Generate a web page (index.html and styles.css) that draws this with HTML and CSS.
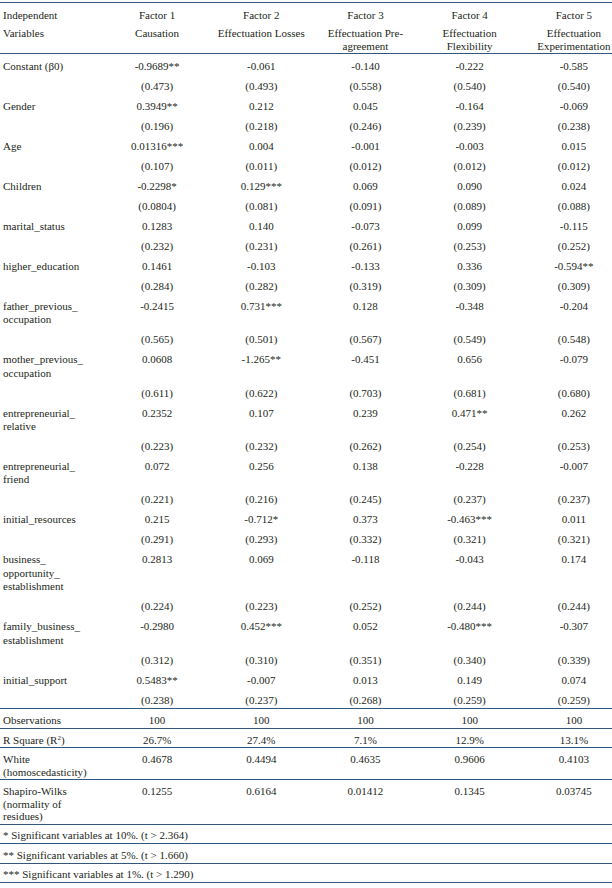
FILE: index.html
```html
<!DOCTYPE html>
<html>
<head>
<meta charset="utf-8">
<link rel="stylesheet" href="styles.css">
</head>
<body>
<div class="frame">
<table class="reg">
  <colgroup>
    <col class="c-var">
    <col class="c-f"><col class="c-f"><col class="c-f"><col class="c-f"><col class="c-f">
  </colgroup>
  <thead>
    <tr class="h1">
      <th class="var">Independent</th>
      <th>Factor 1</th><th>Factor 2</th><th>Factor 3</th><th>Factor 4</th><th>Factor 5</th>
    </tr>
    <tr class="h2">
      <th class="var">Variables</th>
      <th>Causation</th>
      <th>Effectuation Losses</th>
      <th>Effectuation Pre-<br>agreement</th>
      <th>Effectuation<br>Flexibility</th>
      <th>Effectuation<br>Experimentation</th>
    </tr>
  </thead>
  <tbody>
    <tr><td class="var">Constant (β0)</td><td>-0.9689**</td><td>-0.061</td><td>-0.140</td><td>-0.222</td><td>-0.585</td></tr>
    <tr><td class="var"></td><td>(0.473)</td><td>(0.493)</td><td>(0.558)</td><td>(0.540)</td><td>(0.540)</td></tr>
    <tr><td class="var">Gender</td><td>0.3949**</td><td>0.212</td><td>0.045</td><td>-0.164</td><td>-0.069</td></tr>
    <tr><td class="var"></td><td>(0.196)</td><td>(0.218)</td><td>(0.246)</td><td>(0.239)</td><td>(0.238)</td></tr>
    <tr><td class="var">Age</td><td>0.01316***</td><td>0.004</td><td>-0.001</td><td>-0.003</td><td>0.015</td></tr>
    <tr><td class="var"></td><td>(0.107)</td><td>(0.011)</td><td>(0.012)</td><td>(0.012)</td><td>(0.012)</td></tr>
    <tr><td class="var">Children</td><td>-0.2298*</td><td>0.129***</td><td>0.069</td><td>0.090</td><td>0.024</td></tr>
    <tr><td class="var"></td><td>(0.0804)</td><td>(0.081)</td><td>(0.091)</td><td>(0.089)</td><td>(0.088)</td></tr>
    <tr><td class="var">marital_status</td><td>0.1283</td><td>0.140</td><td>-0.073</td><td>0.099</td><td>-0.115</td></tr>
    <tr><td class="var"></td><td>(0.232)</td><td>(0.231)</td><td>(0.261)</td><td>(0.253)</td><td>(0.252)</td></tr>
    <tr><td class="var">higher_education</td><td>0.1461</td><td>-0.103</td><td>-0.133</td><td>0.336</td><td>-0.594**</td></tr>
    <tr><td class="var"></td><td>(0.284)</td><td>(0.282)</td><td>(0.319)</td><td>(0.309)</td><td>(0.309)</td></tr>
    <tr><td class="var">father_previous_<br>occupation</td><td>-0.2415</td><td>0.731***</td><td>0.128</td><td>-0.348</td><td>-0.204</td></tr>
    <tr><td class="var"></td><td>(0.565)</td><td>(0.501)</td><td>(0.567)</td><td>(0.549)</td><td>(0.548)</td></tr>
    <tr><td class="var">mother_previous_<br>occupation</td><td>0.0608</td><td>-1.265**</td><td>-0.451</td><td>0.656</td><td>-0.079</td></tr>
    <tr><td class="var"></td><td>(0.611)</td><td>(0.622)</td><td>(0.703)</td><td>(0.681)</td><td>(0.680)</td></tr>
    <tr><td class="var">entrepreneurial_<br>relative</td><td>0.2352</td><td>0.107</td><td>0.239</td><td>0.471**</td><td>0.262</td></tr>
    <tr><td class="var"></td><td>(0.223)</td><td>(0.232)</td><td>(0.262)</td><td>(0.254)</td><td>(0.253)</td></tr>
    <tr><td class="var">entrepreneurial_<br>friend</td><td>0.072</td><td>0.256</td><td>0.138</td><td>-0.228</td><td>-0.007</td></tr>
    <tr><td class="var"></td><td>(0.221)</td><td>(0.216)</td><td>(0.245)</td><td>(0.237)</td><td>(0.237)</td></tr>
    <tr><td class="var">initial_resources</td><td>0.215</td><td>-0.712*</td><td>0.373</td><td>-0.463***</td><td>0.011</td></tr>
    <tr><td class="var"></td><td>(0.291)</td><td>(0.293)</td><td>(0.332)</td><td>(0.321)</td><td>(0.321)</td></tr>
    <tr><td class="var">business_<br>opportunity_<br>establishment</td><td>0.2813</td><td>0.069</td><td>-0.118</td><td>-0.043</td><td>0.174</td></tr>
    <tr><td class="var"></td><td>(0.224)</td><td>(0.223)</td><td>(0.252)</td><td>(0.244)</td><td>(0.244)</td></tr>
    <tr><td class="var">family_business_<br>establishment</td><td>-0.2980</td><td>0.452***</td><td>0.052</td><td>-0.480***</td><td>-0.307</td></tr>
    <tr><td class="var"></td><td>(0.312)</td><td>(0.310)</td><td>(0.351)</td><td>(0.340)</td><td>(0.339)</td></tr>
    <tr><td class="var">initial_support</td><td>0.5483**</td><td>-0.007</td><td>0.013</td><td>0.149</td><td>0.074</td></tr>
    <tr><td class="var"></td><td>(0.238)</td><td>(0.237)</td><td>(0.268)</td><td>(0.259)</td><td>(0.259)</td></tr>
  </tbody>
  <tbody class="stats">
    <tr><td class="var">Observations</td><td>100</td><td>100</td><td>100</td><td>100</td><td>100</td></tr>
    <tr><td class="var">R Square (R<sup>2</sup>)</td><td>26.7%</td><td>27.4%</td><td>7.1%</td><td>12.9%</td><td>13.1%</td></tr>
    <tr><td class="var">White<br>(homoscedasticity)</td><td>0.4678</td><td>0.4494</td><td>0.4635</td><td>0.9606</td><td>0.4103</td></tr>
    <tr><td class="var">Shapiro-Wilks<br>(normality of<br>residues)</td><td>0.1255</td><td>0.6164</td><td>0.01412</td><td>0.1345</td><td>0.03745</td></tr>
  </tbody>
  <tbody class="notes">
    <tr><td class="note" colspan="6">* Significant variables at 10%. (t &gt; 2.364)</td></tr>
    <tr><td class="note" colspan="6">** Significant variables at 5%. (t &gt; 1.660)</td></tr>
    <tr><td class="note" colspan="6">*** Significant variables at 1%. (t &gt; 1.290)</td></tr>
  </tbody>
</table>
</div>
</body>
</html>
```

FILE: styles.css
```css
html, body {
  margin: 0;
  padding: 0;
  background: #ffffff;
}

.frame {
  width: 612px;
  height: 888px;
  overflow: hidden;
  padding-top: 2px;
  box-sizing: border-box;
}

.reg {
  width: 626px;
  table-layout: fixed;
  border-collapse: collapse;
  font-family: "Liberation Serif", "Times New Roman", serif;
  font-size: 11px;
  line-height: 13.4px;
  color: #231f20;
  border-top: 1px solid #34587a;
}

.c-var { width: 105px; }
.c-f { width: 104.2px; }

.reg th,
.reg td {
  font-weight: normal;
  text-align: center;
  vertical-align: top;
  padding: 5.5px 0 1.1px;
}

.reg .var,
.reg .note {
  text-align: left;
  padding-left: 3px;
}

.reg thead .h2 th {
  padding-top: 3.5px;
  padding-bottom: 0;
}

.reg thead {
  border-bottom: 1px solid #34587a;
}

.stats td {
  line-height: 12.5px;
  padding-top: 5px;
  padding-bottom: 1px;
}

.notes td {
  line-height: 13px;
  padding-top: 4.5px;
  padding-bottom: 1px;
}

.stats tr,
.notes tr {
  border-top: 1px solid #34587a;
}

.notes tr:last-child {
  border-bottom: 1px solid #34587a;
}

.reg sup {
  font-size: 7px;
  line-height: 0;
  vertical-align: baseline;
  position: relative;
  top: -4px;
}
```
